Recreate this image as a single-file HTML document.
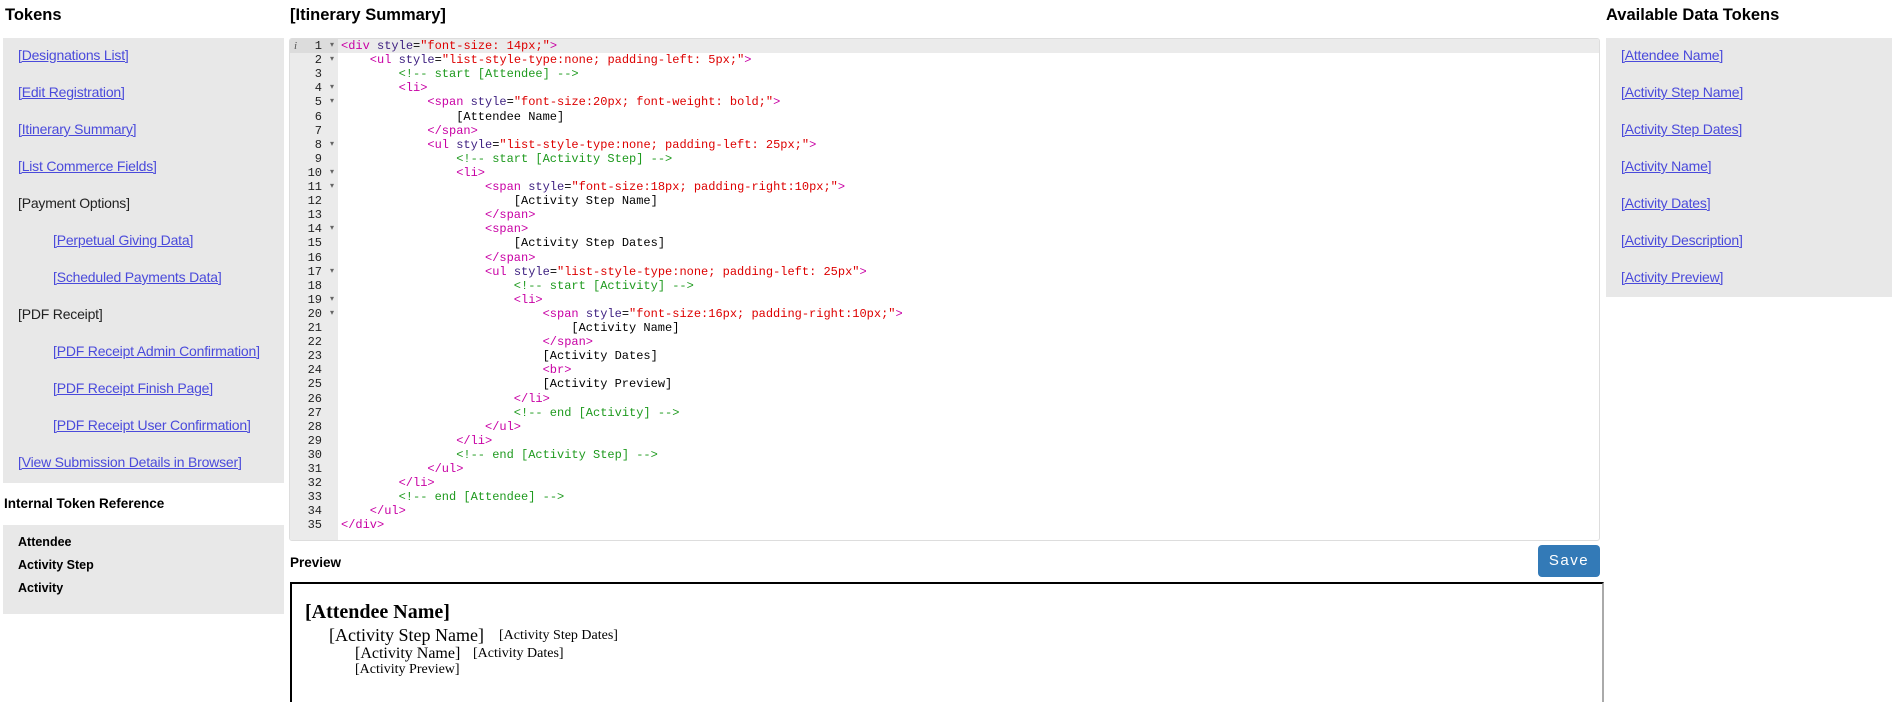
<!DOCTYPE html>
<html><head><meta charset="utf-8"><style>
*{margin:0;padding:0;box-sizing:border-box}
body{width:1892px;height:695px;overflow:hidden;background:#fff;font-family:"Liberation Sans",sans-serif;position:relative}
.h{position:absolute;font-weight:bold;font-size:16.5px;color:#000}
.panel{position:absolute;background:#e8e8e8}
.lk{position:absolute;font-size:14px;letter-spacing:-0.2px;color:#4a4adb;text-decoration:underline}
.pl{position:absolute;font-size:14px;letter-spacing:-0.2px;color:#222}
.b{position:absolute;font-weight:bold;font-size:12.5px;color:#000}
#ed{position:absolute;left:289px;top:38px;width:1311px;height:503px;border:1px solid #ddd;border-radius:3px;background:#fff;overflow:hidden}
#gut{position:absolute;left:0;top:0;width:48px;height:100%;background:#ebebeb}
.ln{position:absolute;left:0;width:48px;height:14.1px;font:12px/14.1px "Liberation Mono",monospace;color:#222;text-align:right;padding-right:16px}
.ln i{position:absolute;right:4px;top:0;font-style:normal;font-size:8px;color:#666}
.cl{position:absolute;left:51px;height:14.1px;font:12px/14.1px "Liberation Mono",monospace;white-space:pre;color:#000}
.t{color:#c800a4}.a{color:#3d1f80}.s{color:#d00}.c{color:#1e9a1e}
#pv{position:absolute;left:290px;top:582px;width:1314px;height:120px;border:2px solid #000;border-right:2px solid #aaa;border-bottom:none;font-family:"Liberation Serif",serif;color:#000}
</style></head><body>
<div class="h" style="left:5px;top:6px">Tokens</div>
<div class="h" style="left:290px;top:6px">[Itinerary Summary]</div>
<div class="h" style="left:1606px;top:6px">Available Data Tokens</div>

<div class="panel" style="left:3px;top:38px;width:281px;height:445px"></div>
<div class="lk" style="left:18px;top:47px">[Designations List]</div>
<div class="lk" style="left:18px;top:84px">[Edit Registration]</div>
<div class="lk" style="left:18px;top:121px">[Itinerary Summary]</div>
<div class="lk" style="left:18px;top:158px">[List Commerce Fields]</div>
<div class="pl" style="left:18px;top:195px">[Payment Options]</div>
<div class="lk" style="left:53px;top:232px">[Perpetual Giving Data]</div>
<div class="lk" style="left:53px;top:269px">[Scheduled Payments Data]</div>
<div class="pl" style="left:18px;top:306px">[PDF Receipt]</div>
<div class="lk" style="left:53px;top:343px">[PDF Receipt Admin Confirmation]</div>
<div class="lk" style="left:53px;top:380px">[PDF Receipt Finish Page]</div>
<div class="lk" style="left:53px;top:417px">[PDF Receipt User Confirmation]</div>
<div class="lk" style="left:18px;top:454px">[View Submission Details in Browser]</div>

<div class="b" style="left:4px;top:496px;font-size:13.5px">Internal Token Reference</div>
<div class="panel" style="left:3px;top:525px;width:281px;height:89px"></div>
<div class="b" style="left:18px;top:535px">Attendee</div>
<div class="b" style="left:18px;top:558px">Activity Step</div>
<div class="b" style="left:18px;top:581px">Activity</div>

<div class="panel" style="left:1606px;top:38px;width:286px;height:259px"></div>
<div class="lk" style="left:1621px;top:47px">[Attendee Name]</div>
<div class="lk" style="left:1621px;top:84px">[Activity Step Name]</div>
<div class="lk" style="left:1621px;top:121px">[Activity Step Dates]</div>
<div class="lk" style="left:1621px;top:158px">[Activity Name]</div>
<div class="lk" style="left:1621px;top:195px">[Activity Dates]</div>
<div class="lk" style="left:1621px;top:232px">[Activity Description]</div>
<div class="lk" style="left:1621px;top:269px">[Activity Preview]</div>

<div id="ed">
<div id="gut"></div>
<div style="position:absolute;left:0;top:0;width:100%;height:14.1px;background:#ebebeb"></div>
<div style="position:absolute;left:0;top:0;width:48px;height:14.1px;background:#dcdcdc"></div>
<div style="position:absolute;left:4px;top:0;font:italic 11px/14.1px 'Liberation Serif',serif;color:#555">i</div>
<div id="lines"></div>
</div>

<div class="b" style="left:290px;top:555px;font-size:13.5px">Preview</div>
<div style="position:absolute;left:1538px;top:545px;width:62px;height:32px;background:#337ab7;border-radius:4px;color:#fff;font-size:15px;letter-spacing:1.5px;text-align:center;line-height:32px">Save</div>

<div id="pv">
<div style="position:absolute;left:13px;top:17px;font-size:20px;font-weight:bold">[Attendee Name]</div>
<div style="position:absolute;left:37px;top:41px;font-size:18px">[Activity Step Name]</div>
<div style="position:absolute;left:207px;top:44px;font-size:14px">[Activity Step Dates]</div>
<div style="position:absolute;left:63px;top:61px;font-size:16px">[Activity Name]</div>
<div style="position:absolute;left:181px;top:62px;font-size:14px">[Activity Dates]</div>
<div style="position:absolute;left:63px;top:78px;font-size:14px">[Activity Preview]</div>
</div>

<script>
var L=[
[0,'<span class=t>&lt;div</span> <span class=a>style</span>=<span class=s>"font-size: 14px;"</span><span class=t>&gt;</span>',1],
[1,'<span class=t>&lt;ul</span> <span class=a>style</span>=<span class=s>"list-style-type:none; padding-left: 5px;"</span><span class=t>&gt;</span>',1],
[2,'<span class=c>&lt;!-- start [Attendee] --&gt;</span>',0],
[2,'<span class=t>&lt;li&gt;</span>',1],
[3,'<span class=t>&lt;span</span> <span class=a>style</span>=<span class=s>"font-size:20px; font-weight: bold;"</span><span class=t>&gt;</span>',1],
[4,'[Attendee Name]',0],
[3,'<span class=t>&lt;/span&gt;</span>',0],
[3,'<span class=t>&lt;ul</span> <span class=a>style</span>=<span class=s>"list-style-type:none; padding-left: 25px;"</span><span class=t>&gt;</span>',1],
[4,'<span class=c>&lt;!-- start [Activity Step] --&gt;</span>',0],
[4,'<span class=t>&lt;li&gt;</span>',1],
[5,'<span class=t>&lt;span</span> <span class=a>style</span>=<span class=s>"font-size:18px; padding-right:10px;"</span><span class=t>&gt;</span>',1],
[6,'[Activity Step Name]',0],
[5,'<span class=t>&lt;/span&gt;</span>',0],
[5,'<span class=t>&lt;span&gt;</span>',1],
[6,'[Activity Step Dates]',0],
[5,'<span class=t>&lt;/span&gt;</span>',0],
[5,'<span class=t>&lt;ul</span> <span class=a>style</span>=<span class=s>"list-style-type:none; padding-left: 25px"</span><span class=t>&gt;</span>',1],
[6,'<span class=c>&lt;!-- start [Activity] --&gt;</span>',0],
[6,'<span class=t>&lt;li&gt;</span>',1],
[7,'<span class=t>&lt;span</span> <span class=a>style</span>=<span class=s>"font-size:16px; padding-right:10px;"</span><span class=t>&gt;</span>',1],
[8,'[Activity Name]',0],
[7,'<span class=t>&lt;/span&gt;</span>',0],
[7,'[Activity Dates]',0],
[7,'<span class=t>&lt;br&gt;</span>',0],
[7,'[Activity Preview]',0],
[6,'<span class=t>&lt;/li&gt;</span>',0],
[6,'<span class=c>&lt;!-- end [Activity] --&gt;</span>',0],
[5,'<span class=t>&lt;/ul&gt;</span>',0],
[4,'<span class=t>&lt;/li&gt;</span>',0],
[4,'<span class=c>&lt;!-- end [Activity Step] --&gt;</span>',0],
[3,'<span class=t>&lt;/ul&gt;</span>',0],
[2,'<span class=t>&lt;/li&gt;</span>',0],
[2,'<span class=c>&lt;!-- end [Attendee] --&gt;</span>',0],
[1,'<span class=t>&lt;/ul&gt;</span>',0],
[0,'<span class=t>&lt;/div&gt;</span>',0]];
var h='';
for(var i=0;i<L.length;i++){var y=(i*14.1).toFixed(1);
h+='<div class=ln style="top:'+y+'px">'+(i+1)+(L[i][2]?'<i>&#9662;</i>':'')+'</div>';
h+='<div class=cl style="top:'+y+'px;left:'+(51+L[i][0]*28.8)+'px">'+L[i][1]+'</div>';}
document.getElementById('lines').innerHTML=h;
</script>
</body></html>
